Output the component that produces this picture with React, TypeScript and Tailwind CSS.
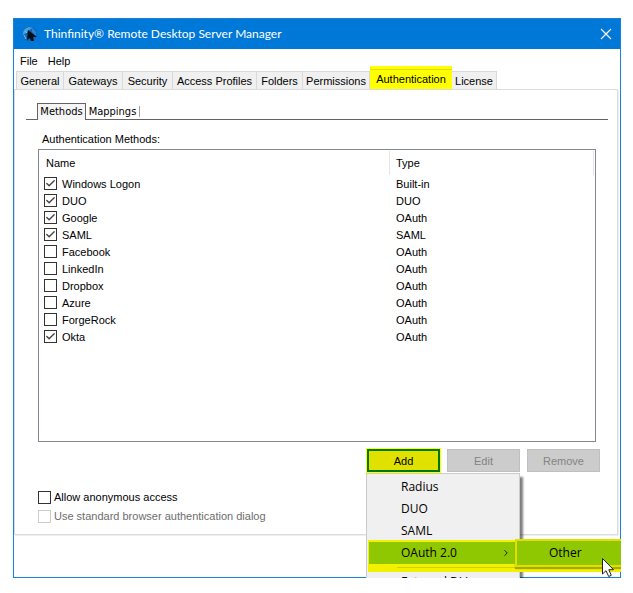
import { Check, ChevronRight } from "lucide-react";

const tabs = [
  { name: "General", width: "w-[48px]" },
  { name: "Gateways", width: "w-[59px]" },
  { name: "Security", width: "w-[50px]" },
  { name: "Access Profiles", width: "w-[84px]" },
  { name: "Folders", width: "w-[46px]" },
  { name: "Permissions", width: "w-[67px]" },
  { name: "Authentication", width: "w-[82px]" },
  { name: "License", width: "w-[45px]" },
];

const methods = [
  { name: "Windows Logon", type: "Built-in", on: true },
  { name: "DUO", type: "DUO", on: true },
  { name: "Google", type: "OAuth", on: true },
  { name: "SAML", type: "SAML", on: true },
  { name: "Facebook", type: "OAuth", on: false },
  { name: "LinkedIn", type: "OAuth", on: false },
  { name: "Dropbox", type: "OAuth", on: false },
  { name: "Azure", type: "OAuth", on: false },
  { name: "ForgeRock", type: "OAuth", on: false },
  { name: "Okta", type: "OAuth", on: true },
];

function Tick({ id, on = false, disabled = false }: { id: string; on?: boolean; disabled?: boolean }) {
  return (
    <span className="relative block size-[13px] shrink-0">
      <input
        id={id}
        type="checkbox"
        defaultChecked={on}
        disabled={disabled}
        className="peer block size-[13px] appearance-none border border-[#333] bg-white disabled:border-[#ccc]"
      />
      <Check
        className="pointer-events-none absolute inset-px hidden text-[#444] peer-checked:block"
        size={11}
        strokeWidth={3}
      />
    </span>
  );
}

function AppIcon() {
  return (
    <svg width="16" height="16" viewBox="0 0 16 16" aria-hidden="true">
      <circle cx="8" cy="8" r="7" fill="#0f66b4" />
      <path d="M1 9A7 7 0 0 1 7 1L11 2L7 4L4 7Z" fill="#4a9fdc" />
      <path d="M10 2Q15 5 14 10L10 6Z" fill="#2c86cb" />
      <path d="M6 4L15 11L11 11L12 15L9 15L8 12L5 14Z" fill="#06101c" />
      <path d="M2 9L4 13M3 5L5 7" stroke="#7dbde8" />
    </svg>
  );
}

function Pointer() {
  return (
    <svg className="absolute top-[18px] left-[86px]" width="14" height="21" viewBox="0 0 14 21" aria-hidden="true">
      <path d="M1.5 1.5V17L5 13.7L7.7 19.5L10.3 18.3L7.8 12.7H12.5Z" fill="#fff" stroke="#222" />
    </svg>
  );
}

function AddMenu() {
  return (
    <div
      role="menu"
      className="absolute top-6 -left-px z-10 w-[154px] border border-[#ccc] bg-[#f0f0f0] pt-[2px] font-['Open_Sans',sans-serif] text-xs shadow-[3px_4px_2px_rgba(0,0,0,0.5)]"
    >
      {["Radius", "DUO", "SAML"].map((item) => (
        <button key={item} role="menuitem" className="block h-[22px] w-full pl-[34px] text-left">
          {item}
        </button>
      ))}
      <div className="relative -mt-[2px] ml-px h-8 bg-[#f2f200] pt-[2px] pl-px">
        <button role="menuitem" className="flex h-[22px] w-full items-center justify-between bg-[#8fc700] pr-[8px] pl-8">
          OAuth 2.0
          <ChevronRight size={10} strokeWidth={2} />
        </button>
        <div className="mt-[3px] ml-7 h-px bg-[#d0d000]" />
        <div role="menu" className="absolute -top-px left-[147px] h-[33px] w-[120px] bg-[#f2f200]">
          <button
            role="menuitem"
            className="flex h-7 w-full items-center border-2 border-[#e0e000] bg-[#8fc700] pl-[32px] shadow-[0_2px_1px_#a8a800]"
          >
            Other
          </button>
          <Pointer />
        </div>
      </div>
      <button role="menuitem" className="block h-[20px] w-full pl-[34px] text-left">
        External DLL
      </button>
    </div>
  );
}

export default function App() {
  return (
    <main className="min-h-screen bg-white pt-[18px] pr-3 pl-[13px] font-['Liberation_Sans',Arial,sans-serif] text-[11px] leading-4 text-black">
      <div className="relative overflow-hidden">
        <div className="border border-[#1883d7] bg-white pb-[42px]">
          <header className="flex h-[30px] items-center bg-[#0078d7] px-2 font-[Lato,sans-serif] text-xs text-white">
            <AppIcon />
            <h1 className="ml-[6px] flex-1">Thinfinity® Remote Desktop Server Manager</h1>
            <button aria-label="Close">
              <svg width="12" height="12" viewBox="0 0 12 12" stroke="#fff" strokeWidth="1.2">
                <path d="M1 1L11 11M11 1L1 11" />
              </svg>
            </button>
          </header>

          <nav className="flex h-[22px] gap-2.5 pt-1 pl-1.5">
            <button className="h-4">File</button>
            <button className="h-4">Help</button>
          </nav>

          <div role="tablist" className="flex h-[18px] items-end pl-[2px]">
            {tabs.map((tab) =>
              tab.name === "Authentication" ? (
                <button key={tab.name} role="tab" aria-selected="true" className={`${tab.width} h-[23px] shrink-0 bg-[#ff0] pt-[3px]`}>
                  <span className="block h-5 border-t border-[#dede00] leading-[18px]">{tab.name}</span>
                </button>
              ) : (
                <button
                  key={tab.name}
                  role="tab"
                  aria-selected="false"
                  className={`${tab.width} h-[18px] shrink-0 border-t border-r border-[#d9d9d9] bg-[#f0f0f0] first:border-l`}
                >
                  {tab.name}
                </button>
              ),
            )}
          </div>

          <section className="mr-[2px] border border-[#dcdcdc] pt-[13px] pr-[9px] pb-2.5 pl-[11px] shadow-[1px_1px_0_#f0f0f0]">
            <div role="tablist" className="flex h-[17px] items-end border-b border-[#646464] pl-[11px] font-['DejaVu_Sans_Condensed',sans-serif]">
              <button role="tab" aria-selected="true" className="-mb-px h-[17px] w-[49px] border border-b-0 border-[#646464] bg-[#f5f5f5]">
                Methods
              </button>
              <button role="tab" aria-selected="false" className="h-[14px] w-[53px] leading-[14px]">
                Mappings
              </button>
              <span className="mb-[2px] h-[11px] w-px bg-[#a0a0a0]" />
            </div>

            <div className="px-3 pt-[11px]">
              <h2 className="pl-1">Authentication Methods:</h2>
              <div className="mt-[2px] h-[293px] border border-[#828790]">
                <table className="w-full table-fixed border-collapse text-left">
                  <thead>
                    <tr className="h-[25px]">
                      <th className="w-[351px] p-0 pl-[7px] font-normal">
                        <span className="block h-6 border-r border-[#e5e5e5] leading-6">Name</span>
                      </th>
                      <th className="p-0 pr-px pl-[6px] font-normal">
                        <span className="block h-6 border-r border-[#e5e5e5] leading-6">Type</span>
                      </th>
                    </tr>
                  </thead>
                  <tbody>
                    {methods.map((m) => (
                      <tr key={m.name} className="h-[17px]">
                        <td className="p-0 pl-[5px]">
                          <div className="flex h-[17px] items-center gap-[5px]">
                            <Tick id={m.name} on={m.on} />
                            <label htmlFor={m.name}>{m.name}</label>
                          </div>
                        </td>
                        <td className="p-0 pl-[6px]">{m.type}</td>
                      </tr>
                    ))}
                  </tbody>
                </table>
              </div>

              <div className="mt-[7px] -mr-1 flex justify-end gap-[7px]">
                <div className="relative w-[73px]">
                  <button className="block h-[23px] w-full border-2 border-[#007800] bg-[#e1e100] ring-1 ring-[#ff0]">Add</button>
                  <AddMenu />
                </div>
                <button disabled className="h-[23px] w-[73px] border border-[#bfbfbf] bg-[#ccc] text-[#838383]">
                  Edit
                </button>
                <button disabled className="h-[23px] w-[73px] border border-[#bfbfbf] bg-[#ccc] text-[#838383]">
                  Remove
                </button>
              </div>

              <div className="mt-[17px] flex flex-col gap-[3px]">
                <div className="flex items-center gap-[3px]">
                  <Tick id="anonymous" />
                  <label htmlFor="anonymous">Allow anonymous access</label>
                </div>
                <div className="flex items-center gap-[3px] text-[#6d6d6d]">
                  <Tick id="browser-dialog" disabled />
                  <label htmlFor="browser-dialog">Use standard browser authentication dialog</label>
                </div>
              </div>
            </div>
          </section>
        </div>
      </div>
    </main>
  );
}
